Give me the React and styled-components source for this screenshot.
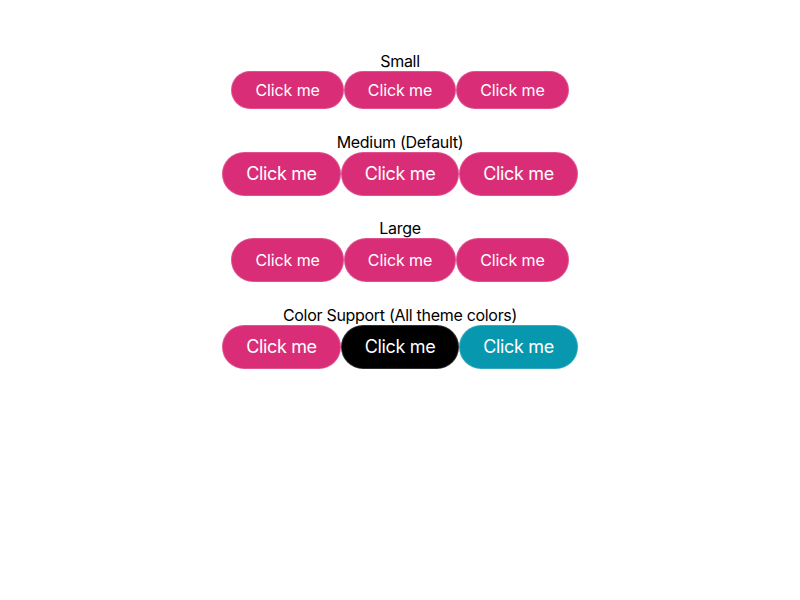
import styled, { createGlobalStyle } from "styled-components";

const GlobalStyle = createGlobalStyle`
  html, body {
    margin: 0;
    padding: 0;
    background: #ffffff;
  }
  body {
    font-family: Inter, "Liberation Sans", Arial, sans-serif;
    color: #000000;
  }
`;

const COLORS = {
  primary: "#d92e77",
  dark: "#000000",
  info: "#0798af",
};

const SIZES = {
  small: { height: 38, font: 16, spacing: -0.1 },
  medium: { height: 44, font: 18, spacing: -0.35 },
  large: { height: 44, font: 16, spacing: -0.1 },
};

const Page = styled.div`
  display: flex;
  flex-direction: column;
  align-items: center;
  gap: 23.5px;
  padding-top: 52px;
`;

const Group = styled.section`
  display: flex;
  flex-direction: column;
  align-items: center;
`;

const Title = styled.div`
  font-size: 16px;
  line-height: 19px;
  letter-spacing: -0.3px;
`;

const Row = styled.div`
  display: flex;
`;

const Button = styled.button`
  box-sizing: border-box;
  height: ${({ size }) => SIZES[size].height}px;
  padding: 0 23px;
  border: 1px solid rgba(255, 255, 255, 0.18);
  border-radius: 999px;
  background-color: ${({ color }) => COLORS[color]};
  color: #ffffff;
  font-family: Inter, "Liberation Sans", Arial, sans-serif;
  font-size: ${({ size }) => SIZES[size].font}px;
  letter-spacing: ${({ size }) => SIZES[size].spacing}px;
  cursor: pointer;
`;

const GROUPS = [
  { title: "Small", size: "small", colors: ["primary", "primary", "primary"] },
  {
    title: "Medium (Default)",
    size: "medium",
    colors: ["primary", "primary", "primary"],
  },
  { title: "Large", size: "large", colors: ["primary", "primary", "primary"] },
  {
    title: "Color Support (All theme colors)",
    size: "medium",
    colors: ["primary", "dark", "info"],
  },
];

const App = () => (
  <>
    <GlobalStyle />
    <Page>
      {GROUPS.map(({ title, size, colors }) => (
        <Group key={title}>
          <Title>{title}</Title>
          <Row>
            {colors.map((color, index) => (
              <Button key={index} size={size} color={color}>
                Click me
              </Button>
            ))}
          </Row>
        </Group>
      ))}
    </Page>
  </>
);

export default App;
